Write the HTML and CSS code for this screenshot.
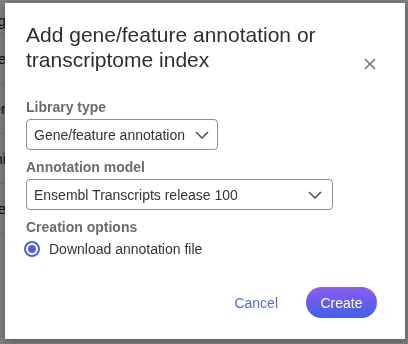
FILE: index.html
```html
<!DOCTYPE html>
<html lang="en">
<head>
    <meta charset="UTF-8">
    <meta name="viewport" content="width=device-width, initial-scale=1.0">
    <title>Add annotation</title>
    <link rel="stylesheet" href="styles.css">
</head>
<body>
    <!-- page behind the modal -->
    <div class="page">
        <div class="page-row short"><span class="page-cell">Setting</span></div>
        <div class="page-row"><span class="page-cell">Name</span></div>
        <div class="page-row"><span class="page-cell">Owner</span></div>
        <div class="page-row"><span class="page-cell">Genomi</span></div>
        <div class="page-row"><span class="page-cell">Name</span></div>
    </div>

    <div class="overlay">
        <div class="dialog">
            <div class="dialog-header">
                <h2 class="dialog-title">Add gene/feature annotation or transcriptome index</h2>
                <button class="close-button" aria-label="Close">
                    <svg width="12" height="12" viewBox="0 0 12 12">
                        <path d="M1 1 L11 11 M11 1 L1 11" stroke="#666" stroke-width="1.4" fill="none"/>
                    </svg>
                </button>
            </div>

            <div class="dialog-body">
                <label class="field-label">Library type</label>
                <div class="select select-narrow">
                    <span>Gene/feature annotation</span>
                    <svg class="chevron" width="14" height="8" viewBox="0 0 14 8">
                        <path d="M1 1 L7 7 L13 1" stroke="#555" stroke-width="1.6" fill="none"/>
                    </svg>
                </div>

                <label class="field-label">Annotation model</label>
                <div class="select select-wide">
                    <span>Ensembl Transcripts release 100</span>
                    <svg class="chevron" width="14" height="8" viewBox="0 0 14 8">
                        <path d="M1 1 L7 7 L13 1" stroke="#555" stroke-width="1.6" fill="none"/>
                    </svg>
                </div>

                <label class="field-label">Creation options</label>
                <div class="radio-row">
                    <span class="radio"><span class="radio-dot"></span></span>
                    <span>Download annotation file</span>
                </div>
            </div>

            <div class="dialog-footer">
                <button class="cancel-button">Cancel</button>
                <button class="create-button">Create</button>
            </div>
        </div>
    </div>
</body>
</html>
```

FILE: styles.css
```css
/* General Styles */
body {
    margin: 0;
    font-family: "Liberation Sans", Arial, sans-serif;
    background-color: white;
    height: 344px;
    overflow: hidden;
}

/* Page behind the modal */
.page {
    padding-top: 8px;
}

.page-row {
    display: flex;
    justify-content: flex-end; /* text overflows to the left */
    width: 6px;
    height: 49px;
    align-items: center;
    border-bottom: 1px solid #e4e4e4;
    font-size: 15px;
    color: #222;
    white-space: nowrap;
}

.page-row.short {
    height: 25px;
}

.page-cell {
    flex-shrink: 0;
}

/* Modal */
.overlay {
    position: fixed;
    top: 0;
    left: 0;
    right: 0;
    bottom: 0;
    background-color: rgba(0, 0, 0, 0.5);
    padding: 3px 3px 5px 5px;
    box-sizing: border-box;
}

.dialog {
    background-color: white;
    width: 400px;
    height: 336px;
    box-sizing: border-box;
    padding: 19px 28px 21px 21px;
    display: flex;
    flex-direction: column;
    box-shadow: 0 2px 8px rgba(0, 0, 0, 0.35);
}

.dialog-header {
    display: flex;
    align-items: flex-end;
}

.dialog-title {
    flex: 1;
    margin: 0;
    font-size: 21px;
    font-weight: normal;
    line-height: 25px;
    color: #2f2f2f;
}

.close-button {
    background: none;
    border: none;
    padding: 0;
    width: 14px;
    height: 14px;
    margin-bottom: 1px;
    display: flex;
    align-items: center;
    justify-content: center;
    cursor: pointer;
}

.dialog-body {
    flex: 1;
    display: flex;
    flex-direction: column;
    align-items: flex-start;
    padding-top: 27px;
}

.field-label {
    font-size: 14px;
    font-weight: bold;
    line-height: 16px;
    color: #6b6b6b;
    margin-bottom: 4px;
}

.select {
    display: flex;
    align-items: center;
    justify-content: space-between;
    height: 31px;
    box-sizing: border-box;
    border: 1px solid #8e8e8e;
    border-radius: 4px;
    padding: 0 8px 0 7px;
    font-size: 14px;
    color: #333;
    margin-bottom: 9px;
}

.select-narrow {
    width: 192px;
}

.select-wide {
    width: 307px;
    padding-right: 10px;
}

.radio-row {
    display: flex;
    align-items: center;
    gap: 9px;
    font-size: 14px;
    color: #333;
    margin-top: 2px;
    margin-left: -2px;
}

.radio {
    width: 16px;
    height: 16px;
    box-sizing: border-box;
    border: 2px solid #4f60e6;
    border-radius: 50%;
    display: flex;
    align-items: center;
    justify-content: center;
}

.radio-dot {
    width: 8px;
    height: 8px;
    border-radius: 50%;
    background-color: #4f60e6;
}

.dialog-footer {
    display: flex;
    justify-content: flex-end;
    align-items: center;
    gap: 28px;
}

.cancel-button {
    background: none;
    border: none;
    padding: 0;
    font-family: inherit;
    font-size: 14px;
    color: #5468e6;
    cursor: pointer;
}

.create-button {
    height: 31px;
    width: 71px;
    border: none;
    border-radius: 16px;
    background: linear-gradient(to bottom, #8a5cf4, #4060e6);
    color: white;
    font-family: inherit;
    font-size: 14px;
    cursor: pointer;
}
```
